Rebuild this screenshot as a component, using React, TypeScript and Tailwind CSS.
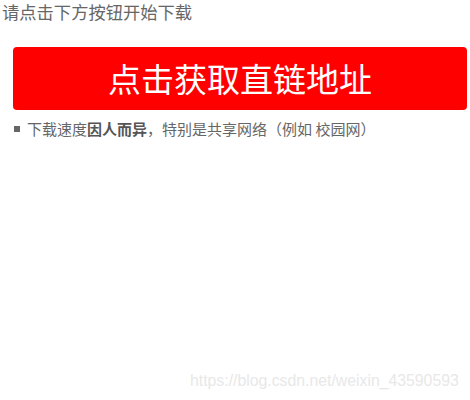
export default function App() {
  return (
    <div className="relative w-[470px] h-[400px] bg-white font-['Noto_Sans_CJK_SC',sans-serif] overflow-hidden">
      <p className="pl-[2px] pt-[1px] text-[17.3px] leading-[21px] text-[#666]">请点击下方按钮开始下载</p>
      <div className="mt-[25px] ml-[13px] w-[454px] h-[63px] rounded-[4px] bg-[#ff0000] flex items-center justify-center text-white text-[33px] leading-none">
        点击获取直链地址
      </div>
      <div className="mt-[9px] ml-[14px] flex items-center text-[15px] leading-[20px] text-[#666]">
        <span className="w-[6px] h-[6px] bg-[#666] mr-[7px]"></span>
        <span>
          下载速度<b className="font-bold text-[#555]">因人而异</b>，特别是共享网络（例如 校园网）
        </span>
      </div>
      <div className="absolute left-[190px] top-[371px] text-[15.8px] leading-[20px] text-[#e8e8e8] font-['Liberation_Sans',sans-serif]">
        https://blog.csdn.net/weixin_43590593
      </div>
    </div>
  );
}
